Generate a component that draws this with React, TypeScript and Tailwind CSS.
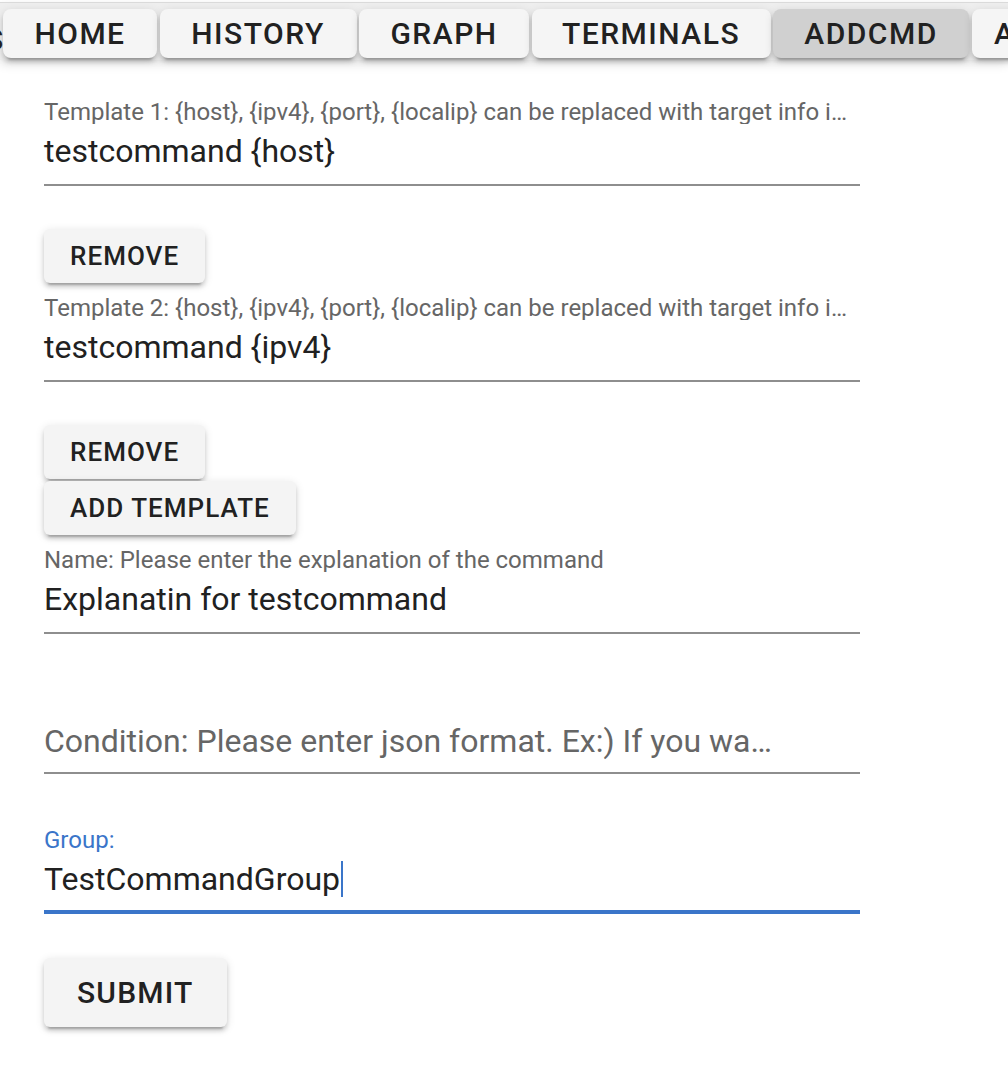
const tabs = [
  { label: "HOME", w: "w-[154px]" },
  { label: "HISTORY", w: "w-[197px]" },
  { label: "GRAPH", w: "w-[170px]" },
  { label: "TERMINALS", w: "w-[239px]" },
  { label: "ADDCMD", w: "w-[196px]", active: true },
  { label: "ABOUT", w: "w-[150px]" },
];

const raised =
  "shadow-[0_6px_2px_-4px_rgba(0,0,0,0.2),0_4px_4px_0_rgba(0,0,0,0.14),0_2px_10px_0_rgba(0,0,0,0.12)]";

function Field({
  label,
  value,
  focused,
}: {
  label: string;
  value?: string;
  focused?: boolean;
}) {
  const placeholder = value === undefined;
  return (
    <div className="flex w-[816px] flex-col">
      <div className="h-[38px] pt-[13px]">
        {!placeholder && (
          <div
            className={`max-w-[808px] truncate text-[24px] leading-[24px] ${
              focused ? "text-[#3a75c9]" : "text-[#666666]"
            }`}
          >
            {label}
          </div>
        )}
      </div>
      <div className="relative h-[61px] border-b-2 border-[#8e8e8e]">
        {placeholder ? (
          <div className="max-w-[728px] truncate pt-[2px] text-[32px] leading-[52px] text-[#666666]">
            {label}
          </div>
        ) : (
          <div className="flex items-center text-[32px] leading-[52px] text-[#212121]">
            <span>{value}</span>
            {focused && <span className="ml-px h-[36px] w-[2px] bg-[#3a75c9]" />}
          </div>
        )}
        {focused && <div className="absolute -bottom-[2px] left-0 right-0 h-[4px] bg-[#3a75c9]" />}
      </div>
    </div>
  );
}

function Btn({ children, large }: { children: string; large?: boolean }) {
  return (
    <button
      className={`self-start rounded-[6px] bg-[#f4f4f4] font-medium text-[#212121] ${raised} ${
        large
          ? "h-[69px] px-[33px] text-[30px] tracking-[0.04em]"
          : "h-[54px] px-[26px] text-[26px] tracking-[0.04em]"
      }`}
    >
      {children}
    </button>
  );
}

export default function App() {
  return (
    <div className="min-h-[1080px] w-[1008px] overflow-hidden bg-white font-['Roboto',sans-serif]">
      <div className="mt-[2px] h-[58px] border-t border-[#dadada] bg-[#eeeeee] shadow-[0_4px_10px_rgba(0,0,0,0.12)]">
        <div className="relative flex gap-[2.5px] pl-[3px] pt-[6px]">
          <span className="absolute -left-[15px] top-[14px] text-[30px] font-medium text-[#212121]">S</span>
          {tabs.map((t) => (
            <div
              key={t.label}
              className={`${t.w} flex h-[49px] shrink-0 items-center justify-center rounded-[8px] text-[30px] font-medium tracking-[0.05em] text-[#212121] ${raised} ${
                t.active ? "bg-[#d0d0d0]" : "bg-[#f5f5f5]"
              }`}
            >
              {t.label}
            </div>
          ))}
        </div>
      </div>

      <div className="flex flex-col pl-[44px] pt-[27px]">
        <Field
          label="Template 1: {host}, {ipv4}, {port}, {localip} can be replaced with target info in the command"
          value="testcommand {host}"
        />
        <div className="mt-[43px] flex">
          <Btn>REMOVE</Btn>
        </div>
        <Field
          label="Template 2: {host}, {ipv4}, {port}, {localip} can be replaced with target info in the command"
          value="testcommand {ipv4}"
        />
        <div className="mt-[43px] flex flex-col gap-[2px]">
          <Btn>REMOVE</Btn>
          <Btn>ADD TEMPLATE</Btn>
        </div>
        <Field label="Name: Please enter the explanation of the command" value="Explanatin for testcommand" />
        <div className="mt-[41px]">
          <Field label="Condition: Please enter json format. Ex:) If you want to run it only on specific port" />
        </div>
        <div className="mt-[41px]">
          <Field label="Group:" value="TestCommandGroup" focused />
        </div>
        <div className="mt-[44px] flex">
          <Btn large>SUBMIT</Btn>
        </div>
      </div>
    </div>
  );
}
